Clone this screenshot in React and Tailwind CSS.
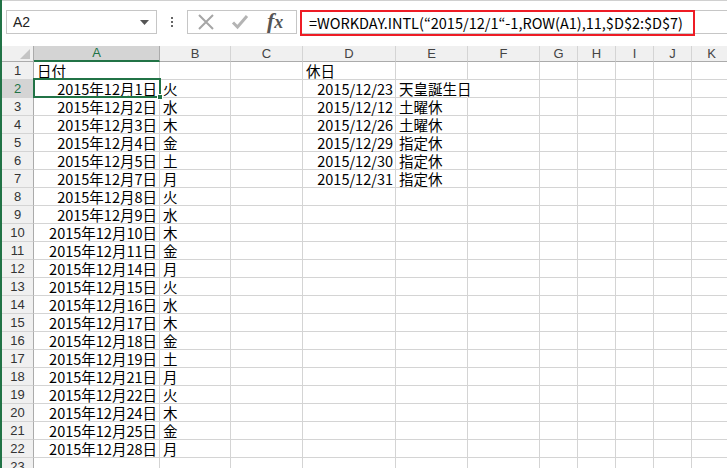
import React from "react";

const cols = [
  { k: "A", w: 126 },
  { k: "B", w: 71 },
  { k: "C", w: 72 },
  { k: "D", w: 93 },
  { k: "E", w: 72 },
  { k: "F", w: 72 },
  { k: "G", w: 38 },
  { k: "H", w: 38 },
  { k: "I", w: 38 },
  { k: "J", w: 38 },
  { k: "K", w: 40 },
];

const aData = [
  ["1", "火"], ["2", "水"], ["3", "木"], ["4", "金"], ["5", "土"], ["7", "月"],
  ["8", "火"], ["9", "水"], ["10", "木"], ["11", "金"], ["14", "月"], ["15", "火"],
  ["16", "水"], ["17", "木"], ["18", "金"], ["19", "土"], ["21", "月"], ["22", "火"],
  ["24", "木"], ["25", "金"], ["28", "月"],
];

const dData = [
  ["2015/12/23", "天皇誕生日"],
  ["2015/12/12", "土曜休"],
  ["2015/12/26", "土曜休"],
  ["2015/12/29", "指定休"],
  ["2015/12/30", "指定休"],
  ["2015/12/31", "指定休"],
];

const cellFont = { fontFamily: '"Noto Sans CJK JP", "Noto Sans", sans-serif' };

function cellContent(row, col) {
  if (row === 1) {
    if (col === "A") return { t: "日付", align: "left" };
    if (col === "D") return { t: "休日", align: "left" };
    return null;
  }
  const i = row - 2;
  if (i >= 0 && i < aData.length) {
    if (col === "A") return { t: `2015年12月${aData[i][0]}日`, align: "right" };
    if (col === "B") return { t: aData[i][1], align: "left" };
  }
  if (i >= 0 && i < dData.length) {
    if (col === "D") return { t: dData[i][0], align: "right" };
    if (col === "E") return { t: dData[i][1], align: "left" };
  }
  return null;
}

export default function App() {
  const rows = Array.from({ length: 23 }, (_, i) => i + 1);
  return (
    <div className="relative w-[727px] h-[468px] overflow-hidden bg-white flex">
      <div className="w-[2px] h-full bg-[#217346] shrink-0" />
      <div className="flex-1 flex flex-col min-w-0">
        {/* formula bar */}
        <div className="h-[46px] shrink-0 border-t border-[#d0d0d0] bg-white flex items-start pt-[9px]">
          <div
            className="ml-[4px] w-[151px] h-[24px] border border-[#c6c6c6] flex items-center justify-between pl-[6px] pr-[7px] text-[14px] text-[#222]"
            style={{ fontFamily: '"Liberation Sans", Arial, sans-serif' }}
          >
            <span>A2</span>
            <svg width="9" height="5" viewBox="0 0 9 5"><path d="M0 0h9L4.5 5z" fill="#555" /></svg>
          </div>
          <div className="w-[30px] h-[24px] flex flex-col items-center justify-center gap-[2px]">
            <span className="w-[2px] h-[2px] bg-[#666]" />
            <span className="w-[2px] h-[2px] bg-[#666]" />
            <span className="w-[2px] h-[2px] bg-[#666]" />
          </div>
          <div className="w-[110px] h-[24px] border border-[#c6c6c6] flex items-center pl-[9px]">
            <svg width="18" height="18" viewBox="0 0 18 18">
              <path d="M2 2L16 16M16 2L2 16" stroke="#a6a6a6" strokeWidth="2" fill="none" />
            </svg>
            <svg className="ml-[16px]" width="18" height="18" viewBox="0 0 18 18">
              <path d="M2 9.5L6.5 14L16 3" stroke="#b4b4b4" strokeWidth="3" fill="none" />
            </svg>
            <span
              className="ml-[18px] text-[22px] italic text-[#555] leading-none -mt-[2px]"
              style={{ fontFamily: '"Liberation Serif", "Times New Roman", serif' }}
            >
              <span className="font-bold">f</span><span className="text-[18px] font-bold">x</span>
            </span>
          </div>
          <div className="ml-[4px] flex-1 h-[24px] border-y border-[#c6c6c6] flex">
            <div
              className="w-[395px] h-[26px] -mt-[1px] -ml-[1px] border-2 border-[#ee1c25] flex items-center pl-[7px] text-[14.5px] text-black whitespace-nowrap"
              style={cellFont}
            >
              =WORKDAY.INTL(“2015/12/1“-1,ROW(A1),11,$D$2:$D$7)
            </div>
          </div>
        </div>
        {/* grid */}
        <div className="relative">
          <div className="flex h-[16px]">
            <div className="w-[32px] shrink-0 bg-[#f0f0f0] border-r border-b border-[#ababab] relative">
              <svg className="absolute right-[3px] bottom-[2px]" width="10" height="10" viewBox="0 0 10 10">
                <path d="M10 0V10H0z" fill="#c4c4c4" />
              </svg>
            </div>
            {cols.map((c) => (
              <div
                key={c.k}
                className={
                  "shrink-0 flex items-center justify-center text-[13px] border-r " +
                  (c.k === "A"
                    ? "bg-[#d4d4d4] text-[#217346] border-[#ababab] border-b-2 border-b-[#217346]"
                    : "bg-[#f0f0f0] text-[#444] border-[#d4d4d4] border-b border-b-[#ababab]")
                }
                style={{ width: c.w, fontFamily: '"Liberation Sans", Arial, sans-serif' }}
              >
                {c.k}
              </div>
            ))}
          </div>
          {rows.map((r) => (
            <div key={r} className="flex h-[18px]">
              <div
                className={
                  "w-[32px] shrink-0 flex items-center justify-center text-[13px] leading-[17px] border-r border-b border-r-[#ababab] border-b-[#d4d4d4] " +
                  (r === 2 ? "bg-[#d4d4d4] text-[#217346]" : "bg-[#f0f0f0] text-[#333]")
                }
                style={{ fontFamily: '"Liberation Sans", Arial, sans-serif' }}
              >
                {r}
              </div>
              {cols.map((c) => {
                const v = cellContent(r, c.k);
                const noRight = r === 2 && c.k === "E";
                return (
                  <div
                    key={c.k}
                    className={
                      "shrink-0 relative border-b border-[#d4d4d4] text-[14.5px] leading-[17px] text-black whitespace-nowrap flex items-center " +
                      (noRight ? "border-r border-r-transparent " : "border-r ") +
                      (v && v.align === "right" ? "justify-end pr-[2px]" : "pl-[3px]")
                    }
                    style={{ width: c.w, ...cellFont }}
                  >
                    {v ? <span className={noRight ? "relative z-10 leading-[17px]" : "leading-[17px]"}>{v.t}</span> : null}
                  </div>
                );
              })}
            </div>
          ))}
          {/* active cell */}
          <div className="absolute left-[31px] top-[32px] w-[128px] h-[20px] border-2 border-[#217346] pointer-events-none" />
          <div className="absolute left-[155px] top-[48px] w-[6px] h-[6px] bg-[#217346] border border-white" />
        </div>
      </div>
    </div>
  );
}
